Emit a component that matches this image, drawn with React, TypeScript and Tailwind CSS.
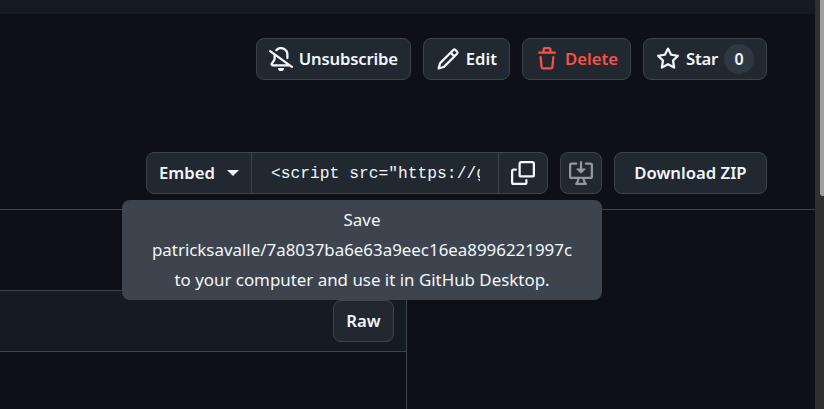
import React from 'react';

const sans = "font-['Noto_Sans','Open_Sans',sans-serif]";

const BellSlash = () => (
  <svg width="24" height="24" viewBox="0 0 16 16" fill="currentColor">
    <path d="m4.182 4.31.016.011 10.104 7.316.013.01 1.375.996a.75.75 0 1 1-.88 1.214L13.626 13H2.518a1.516 1.516 0 0 1-1.263-2.36l1.703-2.554A.255.255 0 0 0 3 7.947V5.305L.31 3.357a.75.75 0 1 1 .88-1.214Zm7.373 7.19L4.5 6.391v1.556c0 .346-.102.683-.294.97l-1.703 2.556a.017.017 0 0 0-.003.01c0 .005.002.009.005.012l.006.004.007.001ZM8 1.5c-.997 0-1.895.416-2.534 1.086A.75.75 0 1 1 4.38 1.55 5 5 0 0 1 13 5v2.373a.75.75 0 0 1-1.5 0V5A3.5 3.5 0 0 0 8 1.5ZM8 16a2 2 0 0 1-1.985-1.75c-.017-.137.097-.25.235-.25h3.5c.138 0 .252.113.235.25A2 2 0 0 1 8 16Z" />
  </svg>
);

const Pencil = () => (
  <svg width="24" height="24" viewBox="0 0 16 16" fill="currentColor">
    <path d="M11.013 1.427a1.75 1.75 0 0 1 2.474 0l1.086 1.086a1.75 1.75 0 0 1 0 2.474l-8.61 8.61c-.21.21-.47.364-.756.445l-3.251.93a.75.75 0 0 1-.927-.928l.929-3.25c.081-.286.235-.547.445-.758l8.61-8.61Zm.176 4.823L9.75 4.81l-6.286 6.287a.253.253 0 0 0-.064.108l-.558 1.953 1.953-.558a.253.253 0 0 0 .108-.064Zm1.238-3.763a.25.25 0 0 0-.354 0L10.811 3.75l1.439 1.44 1.263-1.263a.25.25 0 0 0 0-.354Z" />
  </svg>
);

const Trash = () => (
  <svg width="24" height="24" viewBox="0 0 16 16" fill="currentColor">
    <path d="M11 1.75V3h2.25a.75.75 0 0 1 0 1.5H2.75a.75.75 0 0 1 0-1.5H5V1.75C5 .784 5.784 0 6.75 0h2.5C10.216 0 11 .784 11 1.75ZM4.496 6.675l.66 6.6a.25.25 0 0 0 .249.225h5.19a.25.25 0 0 0 .249-.225l.66-6.6a.75.75 0 0 1 1.492.149l-.66 6.6A1.748 1.748 0 0 1 10.595 15h-5.19a1.75 1.75 0 0 1-1.741-1.575l-.66-6.6a.75.75 0 1 1 1.492-.15ZM6.5 1.75V3h3V1.75a.25.25 0 0 0-.25-.25h-2.5a.25.25 0 0 0-.25.25Z" />
  </svg>
);

const Star = () => (
  <svg width="24" height="24" viewBox="0 0 16 16" fill="currentColor">
    <path d="M8 .25a.75.75 0 0 1 .673.418l1.882 3.815 4.21.612a.75.75 0 0 1 .416 1.279l-3.046 2.97.719 4.192a.751.751 0 0 1-1.088.791L8 12.347l-3.766 1.98a.75.75 0 0 1-1.088-.79l.72-4.194L.818 6.374a.75.75 0 0 1 .416-1.28l4.21-.611L7.327.668A.75.75 0 0 1 8 .25Zm0 2.445L6.615 5.5a.75.75 0 0 1-.564.41l-3.097.45 2.24 2.184a.75.75 0 0 1 .216.664l-.528 3.084 2.769-1.456a.75.75 0 0 1 .698 0l2.77 1.456-.53-3.084a.75.75 0 0 1 .216-.664l2.24-2.183-3.096-.45a.75.75 0 0 1-.564-.41L8 2.694Z" />
  </svg>
);

const Copy = () => (
  <svg width="24" height="24" viewBox="0 0 16 16" fill="currentColor">
    <path d="M0 6.75C0 5.784.784 5 1.75 5h1.5a.75.75 0 0 1 0 1.5h-1.5a.25.25 0 0 0-.25.25v7.5c0 .138.112.25.25.25h7.5a.25.25 0 0 0 .25-.25v-1.5a.75.75 0 0 1 1.5 0v1.5A1.75 1.75 0 0 1 9.25 16h-7.5A1.75 1.75 0 0 1 0 14.25Z" />
    <path d="M5 1.75C5 .784 5.784 0 6.75 0h7.5C15.216 0 16 .784 16 1.75v7.5A1.75 1.75 0 0 1 14.25 11h-7.5A1.75 1.75 0 0 1 5 9.25Zm1.75-.25a.25.25 0 0 0-.25.25v7.5c0 .138.112.25.25.25h7.5a.25.25 0 0 0 .25-.25v-7.5a.25.25 0 0 0-.25-.25Z" />
  </svg>
);

const DesktopDownload = () => (
  <svg width="24" height="24" viewBox="0 0 16 16" fill="currentColor">
    <path d="m4.927 5.427 2.896 2.896a.25.25 0 0 0 .354 0l2.896-2.896A.25.25 0 0 0 10.896 5H8.75V.75a.75.75 0 1 0-1.5 0V5H5.104a.25.25 0 0 0-.177.427Z" />
    <path d="M1.573 2.573a.25.25 0 0 0-.073.177v7.5a.25.25 0 0 0 .25.25h12.5a.25.25 0 0 0 .25-.25v-7.5a.25.25 0 0 0-.25-.25h-3a.75.75 0 0 1 0-1.5h3A1.75 1.75 0 0 1 16 2.75v7.5A1.75 1.75 0 0 1 14.25 12h-3.727c.099 1.041.52 1.872 1.292 2.757A.75.75 0 0 1 11.25 16h-6.5a.75.75 0 0 1-.565-1.243c.772-.885 1.192-1.716 1.292-2.757H1.75A1.75 1.75 0 0 1 0 10.25v-7.5A1.75 1.75 0 0 1 1.75 1h3a.75.75 0 0 1 0 1.5h-3a.25.25 0 0 0-.177.073ZM6.982 12a5.72 5.72 0 0 1-.765 2.5h3.566a5.72 5.72 0 0 1-.765-2.5H6.982Z" />
  </svg>
);

const btn = 'flex h-[42px] items-center rounded-lg border border-[#3d444d] bg-[#212830] text-[16.7px] font-semibold';

export default function App() {
  return (
    <div className={`flex h-[409px] w-[824px] overflow-hidden bg-[#0d1117] text-[#f0f6fc] ${sans}`}>
      <div className="flex w-[815px] shrink-0 flex-col">
        <div className="h-[14px] shrink-0 bg-[#151b23]" />

        {/* actions */}
        <div className="mt-6 flex justify-end gap-3 pr-12">
          <button className={`${btn} gap-1.5 px-3 tracking-[-0.2px]`}><BellSlash />Unsubscribe</button>
          <button className={`${btn} gap-1.5 px-3`}><Pencil />Edit</button>
          <button className={`${btn} gap-1.5 px-3 text-[#f85149]`}><Trash />Delete</button>
          <button className={`${btn} gap-1.5 px-3`}>
            <Star /><span className="tracking-[-0.25px]">Star</span>
            <span className="flex h-[30px] w-[30px] items-center justify-center rounded-full bg-[#2f3742] text-[16px]">0</span>
          </button>
        </div>

        {/* clone row */}
        <div className="mt-[72px] flex h-[42px] items-center justify-end gap-3 pr-12">
          <div className="flex h-[42px] w-[402px] items-stretch rounded-lg border border-[#3d444d] bg-[#212830]">
            <div className="flex w-[105px] items-center gap-3 border-r border-[#3d444d] pl-3 text-[16.7px] font-semibold">
              Embed
              <span className="h-0 w-0 border-x-[6px] border-t-[6px] border-x-transparent border-t-[#f0f6fc]" />
            </div>
            <div className="flex w-[247px] items-center border-r border-[#3d444d] pt-0.5 pl-[19px] font-['Liberation_Mono',monospace] text-[16.3px]">
              <span className="w-[209px] overflow-hidden whitespace-nowrap">{'<script src="https://gist'}</span>
            </div>
            <div className="flex flex-1 items-center justify-center"><Copy /></div>
          </div>
          <button className="flex h-[42px] w-[42px] items-center justify-center rounded-lg border border-[#3d444d] bg-[#212830] text-[#9198a1]"><DesktopDownload /></button>
          <button className={`${btn} h-[41px] w-[153px] justify-center`}>Download ZIP</button>
        </div>

        {/* file panel */}
        <div className="relative mt-[15px] flex-1">
          <div className="h-full w-[407px] border-t border-r border-[#3d444d] pt-20">
            <div className="flex h-[62px] items-center justify-end border-y border-[#3d444d] bg-[#151b23] pr-3">
              <button className={`${btn} w-[61px] justify-center`}>Raw</button>
            </div>
          </div>
          <div className="absolute top-0 right-0 h-px w-[408px] bg-[#3d444d]" />

          {/* tooltip */}
          <div className="absolute top-[-9px] left-[122px] flex h-[100px] w-[480px] flex-col items-center justify-center rounded-lg bg-[#3d444d] text-center text-[16.9px] leading-[30px] text-[#f0f6fc]">
            <span>Save</span>
            <span>patricksavalle/7a8037ba6e63a9eec16ea8996221997c</span>
            <span>to your computer and use it in GitHub Desktop.</span>
          </div>
        </div>
      </div>

      {/* scrollbar */}
      <div className="flex flex-1 justify-end bg-[#2f2f2f]">
        <div className="h-[196px] w-1 rounded-bl-[3px] bg-[#a0a0a0]" />
      </div>
    </div>
  );
}
